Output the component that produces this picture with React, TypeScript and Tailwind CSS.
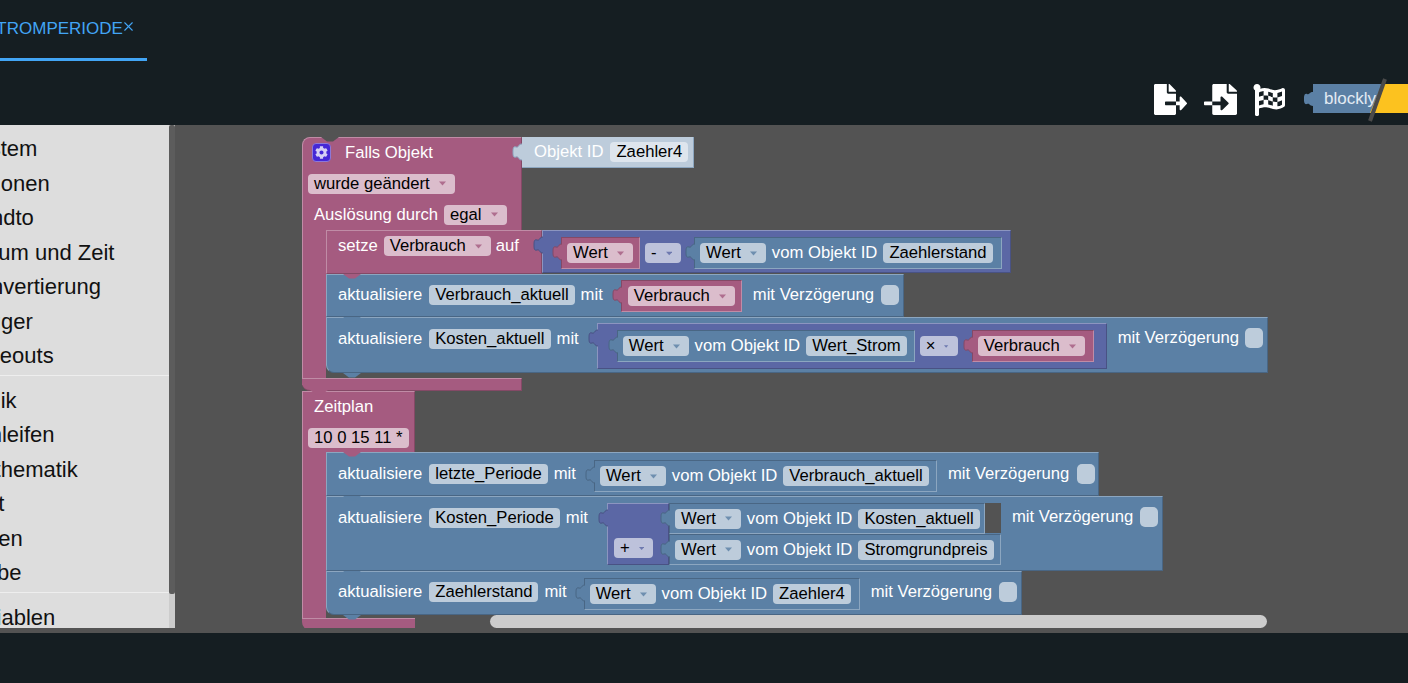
import { X } from "lucide-react";
import { FaCog, FaFileExport, FaFileImport, FaFlagCheckered } from "react-icons/fa";
import type { ReactNode } from "react";

type Tone = "pink" | "blue" | "purple";

const BLOCK: Record<Tone, string> = {
  pink: "bg-[#a55b80] border-t-[#c08ca6] border-l-[#c08ca6] border-b-[#844966] border-r-[#844966]",
  blue: "bg-[#5b80a5] border-t-[#8ca6c0] border-l-[#8ca6c0] border-b-[#496684] border-r-[#496684]",
  purple: "bg-[#5b67a5] border-t-[#8c95c0] border-l-[#8c95c0] border-b-[#495284] border-r-[#495284]",
};
const INNER: Record<Tone, string> = {
  pink: "bg-[#a55b80] border-t-[#844966] border-l-[#844966] border-b-[#c08ca6] border-r-[#c08ca6]",
  blue: "bg-[#5b80a5] border-t-[#496684] border-l-[#496684] border-b-[#8ca6c0] border-r-[#8ca6c0]",
  purple: "bg-[#5b67a5] border-t-[#495284] border-l-[#495284] border-b-[#8c95c0] border-r-[#8c95c0]",
};
const FIELD: Record<Tone, string> = {
  pink: "bg-[#dbbdcc]",
  blue: "bg-[#bdccdb]",
  purple: "bg-[#bdc2db]",
};
const FILL: Record<Tone, string> = {
  pink: "#a55b80",
  blue: "#5b80a5",
  purple: "#5b67a5",
};
const EDGE: Record<Tone, string> = {
  pink: "#844966",
  blue: "#496684",
  purple: "#495284",
};

// blockly's output connector, fill closes along the block edge, stroke only on the curve
function PuzzleTab({ color, edge, className = "top-[3px]" }: { color: string; edge: string; className?: string }) {
  const curve = "M10 3 C6 3 7 7 4 6 C1 5 1 8 1 11 C1 14 1 17 4 16 C7 15 6 19 10 19";
  return (
    <svg width="10" height="22" viewBox="0 0 10 22" className={`absolute -left-[10px] ${className}`}>
      <path d={`${curve} Z`} fill={color} />
      <path d={curve} fill="none" stroke={edge} strokeWidth="1" />
    </svg>
  );
}

function Notch({ color, className }: { color: string; className: string }) {
  return (
    <svg width="18" height="5" viewBox="0 0 18 5" className={`absolute z-10 ${className}`}>
      <path d="M0 0 L6 4.5 H12 L18 0 Z" fill={color} />
    </svg>
  );
}

function Text({ children, className = "" }: { children: ReactNode; className?: string }) {
  return (
    <span className={`h-[20px] shrink-0 whitespace-pre text-[16.67px] leading-[20px] text-white ${className}`}>
      {children}
    </span>
  );
}

function Field({
  tone,
  drop,
  children,
  className = "",
}: {
  tone: Tone;
  drop?: boolean;
  children: ReactNode;
  className?: string;
}) {
  return (
    <span
      className={`flex h-[20px] shrink-0 items-center whitespace-pre rounded-[4px] pl-[6px] text-[16.67px] leading-[20px] text-black ${
        drop ? "pr-[9px]" : "pr-[6px]"
      } ${FIELD[tone]} ${className}`}
    >
      {children}
      {drop && (
        <svg width="7" height="5" viewBox="0 0 7 5" className="ml-[9px] opacity-80">
          <path d="M0 0.5 H7 L3.5 4.5 Z" fill={FILL[tone]} />
        </svg>
      )}
    </span>
  );
}

function Check({ className = "" }: { className?: string }) {
  return <span className={`h-[20px] w-[18px] shrink-0 rounded-[5px] bg-[#bdccdb] ${className}`} />;
}

function Value({
  tone,
  className = "",
  children,
}: {
  tone: Tone;
  className?: string;
  children: ReactNode;
}) {
  return (
    <div className={`relative flex h-[32px] shrink-0 items-center border pl-[5px] ${INNER[tone]} ${className}`}>
      <PuzzleTab color={FILL[tone]} edge={EDGE[tone]} />
      {children}
    </div>
  );
}

function ObjectValue({ id, className = "" }: { id: string; className?: string }) {
  return (
    <Value tone="blue" className={className}>
      <Field tone="blue" drop>Wert</Field>
      <Text className="ml-[6px]">vom Objekt ID</Text>
      <Field tone="blue" className="ml-[6px]">{id}</Field>
    </Value>
  );
}

function Statement({
  className,
  pad = "pt-[10px]",
  children,
}: {
  className: string;
  pad?: string;
  children: ReactNode;
}) {
  return (
    <div className={`absolute flex items-start border pl-[11px] ${pad} ${BLOCK.blue} ${className}`}>
      {children}
    </div>
  );
}

const MENU = [
  ["System", "Aktionen", "Sendto", "Datum und Zeit", "Konvertierung", "Trigger", "Timeouts"],
  ["Logik", "Schleifen", "Mathematik", "Text", "Listen", "Farbe"],
  ["Variablen"],
];

function Sidebar() {
  return (
    <aside className="relative flex h-[503px] w-[175px] shrink-0 overflow-hidden">
      <div className="w-[169px] overflow-hidden bg-[#dddddd] pt-[7px]">
        {MENU.map((group, i) => (
          <div key={i} className={i < 2 ? "mb-[8px] border-b border-[#eeeeee] pb-[1px]" : ""}>
            {group.map((item) => (
              <div
                key={item}
                className="-ml-[36px] h-[34.5px] whitespace-nowrap text-[22px] leading-[34.5px] text-[#111111]"
              >
                {item}
              </div>
            ))}
          </div>
        ))}
      </div>
      <div className="w-[6px] bg-[#cccccc]">
        <div className="h-[469px] rounded-[2px] bg-[#5c5c5c]" />
      </div>
    </aside>
  );
}

function BlocklyLogo() {
  return (
    <svg width="106" height="46" viewBox="0 0 106 46" className="ml-[17px] shrink-0">
      <path d="M80 8 H106 V37 H66 Z" fill="#fcc21f" />
      <path
        d="M11 8 H80 L68 37 H11 V30 C7 30 8 27 5 28 C2 29 2 25 2 23 C2 21 2 17 5 18 C8 19 7 16 11 16 Z"
        fill="#5b80a5"
      />
      <text x="22" y="28" fontFamily="Liberation Sans, sans-serif" fontSize="17" fill="#e3ebf3">
        blockly
      </text>
      <path d="M83 3 L68 45" stroke="#4a4a4a" strokeWidth="4" />
    </svg>
  );
}

function Canvas() {
  return (
    <div className="relative h-[503px] flex-1 overflow-hidden bg-[#535353]">
      {/* Falls Objekt */}
      <div className={`absolute left-[127px] top-[12px] flex h-[94px] w-[220px] flex-col rounded-tl-[8px] border ${BLOCK.pink}`}>
        <div className="flex h-[29px] items-center pl-[9px]">
          <span className="flex h-[19px] w-[19px] items-center justify-center rounded-[4px] border border-[#8c78d8] bg-[#4527d6]">
            <FaCog size={13} className="text-[#d6cff5]" />
          </span>
          <Text className="ml-[14px]">Falls Objekt</Text>
        </div>
        <div className="flex h-[31px] items-center pl-[5px] pt-[2px]">
          <Field tone="pink" drop>wurde geändert</Field>
        </div>
        <div className="flex h-[31px] items-center pl-[11px] pt-[2px]">
          <Text>Auslösung durch</Text>
          <Field tone="pink" drop className="ml-[6px]">egal</Field>
        </div>
      </div>
      <Notch color="#535353" className="left-[146px] top-[12px]" />
      <div className="absolute left-[127px] top-[105px] h-[155px] w-[24px] border-l border-l-[#c08ca6] bg-[#a55b80]" />
      <div className="absolute left-[127px] top-[253px] h-[13px] w-[220px] rounded-bl-[8px] border-b border-r border-t border-b-[#844966] border-r-[#844966] border-t-[#c08ca6] bg-[#a55b80]" />

      {/* Objekt ID */}
      <div className="absolute left-[347px] top-[12px] flex h-[31px] w-[172px] items-center border-b border-r border-b-[#8ca6c0] border-r-[#8ca6c0] bg-[#bdccdb] pl-[12px]">
        <PuzzleTab color="#bdccdb" edge="#8ca6c0" className="top-[4px]" />
        <Text>Objekt ID</Text>
        <Field tone="blue" className="ml-[7px] bg-[#dee5ed]!">Zaehler4</Field>
      </div>

      {/* setze Verbrauch */}
      <div className={`absolute left-[151px] top-[105px] flex h-[44px] w-[216px] items-start border pl-[11px] pt-[5px] ${BLOCK.pink}`}>
        <Text>setze</Text>
        <Field tone="pink" drop className="ml-[6px]">Verbrauch</Field>
        <Text className="ml-[5px]">auf</Text>
      </div>
      <Notch color="#a55b80" className="left-[168px] top-[149px]" />
      <div className={`absolute left-[367px] top-[105px] flex h-[43px] w-[469px] items-start border pl-[18px] pt-[6px] ${BLOCK.purple}`}>
        <PuzzleTab color="#5b67a5" edge="#495284" />
        <Value tone="pink" className="w-[79px]">
          <Field tone="pink" drop>Wert</Field>
        </Value>
        <Field tone="purple" drop className="ml-[5px] mt-[6px] w-[36px]">-</Field>
        <Value tone="blue" className="ml-[13px] w-[308px]">
          <Field tone="blue" drop>Wert</Field>
          <Text className="ml-[6px]">vom Objekt ID</Text>
          <Field tone="blue" className="ml-[6px]">Zaehlerstand</Field>
        </Value>
      </div>

      {/* aktualisiere Verbrauch_aktuell */}
      <Statement className="left-[151px] top-[149px] h-[43px] w-[578px]">
        <Text>aktualisiere</Text>
        <Field tone="blue" className="ml-[7px]">Verbrauch_aktuell</Field>
        <Text className="ml-[6px]">mit</Text>
        <Value tone="pink" className="-mt-[5px] ml-[18px] w-[121px]">
          <Field tone="pink" drop className="ml-[1px]">Verbrauch</Field>
        </Value>
        <Text className="ml-[11px]">mit Verzögerung</Text>
        <Check className="ml-[7px]" />
      </Statement>
      <Notch color="#5b80a5" className="left-[168px] top-[192px]" />

      {/* aktualisiere Kosten_aktuell */}
      <Statement pad="pt-[11px]" className="left-[151px] top-[192px] h-[56px] w-[942px] rounded-bl-[8px]">
        <Text>aktualisiere</Text>
        <Field tone="blue" className="ml-[7px]">Kosten_aktuell</Field>
        <Text className="ml-[6px]">mit</Text>
        <div className={`relative -mt-[6px] ml-[18px] flex h-[46px] w-[510px] shrink-0 items-start border pl-[19px] pt-[6px] ${BLOCK.purple}`}>
          <PuzzleTab color="#5b67a5" edge="#495284" />
          <ObjectValue id="Wert_Strom" className="w-[298px]" />
          <Field tone="purple" drop className="ml-[5px] mt-[6px] w-[38px]">×</Field>
          <Value tone="pink" className="ml-[14px] w-[122px]">
            <Field tone="pink" drop>Verbrauch</Field>
          </Value>
        </div>
        <Text className="-mt-[1px] ml-[11px]">mit Verzögerung</Text>
        <Check className="-mt-[1px] ml-[6px]" />
      </Statement>
      <Notch color="#5b80a5" className="left-[168px] top-[248px]" />

      {/* Zeitplan */}
      <div className={`absolute left-[127px] top-[266px] flex h-[62px] w-[113px] flex-col border ${BLOCK.pink}`}>
        <div className="flex h-[30px] items-center pl-[11px]">
          <Text>Zeitplan</Text>
        </div>
        <div className="flex h-[31px] items-center pl-[5px] pt-[2px]">
          <Field tone="pink">10 0 15 11 *</Field>
        </div>
      </div>
      <Notch color="#a55b80" className="left-[135px] top-[265px]" />
      <div className="absolute left-[127px] top-[327px] h-[170px] w-[24px] border-l border-l-[#c08ca6] bg-[#a55b80]" />
      <div className="absolute left-[127px] top-[493px] h-[12px] w-[113px] rounded-bl-[8px] border-t border-t-[#c08ca6] bg-[#a55b80]" />

      {/* aktualisiere letzte_Periode */}
      <Statement pad="pt-[11px]" className="left-[151px] top-[327px] h-[44px] w-[773px]">
        <Text>aktualisiere</Text>
        <Field tone="blue" className="ml-[7px]">letzte_Periode</Field>
        <Text className="ml-[6px]">mit</Text>
        <ObjectValue id="Verbrauch_aktuell" className="-mt-[4px] ml-[18px] w-[343px]" />
        <Text className="ml-[11px]">mit Verzögerung</Text>
        <Check className="ml-[8px]" />
      </Statement>
      <Notch color="#a55b80" className="left-[168px] top-[327px]" />
      <Notch color="#5b80a5" className="left-[168px] top-[371px]" />

      {/* aktualisiere Kosten_Periode */}
      <Statement pad="pt-[11px]" className="left-[151px] top-[371px] h-[75px] w-[837px]">
        <Text>aktualisiere</Text>
        <Field tone="blue" className="ml-[7px]">Kosten_Periode</Field>
        <Text className="ml-[6px]">mit</Text>
        <div className={`relative -mt-[5px] ml-[19px] flex h-[62px] w-[62px] shrink-0 items-end border pb-[6px] pl-[6px] ${BLOCK.purple}`}>
          <PuzzleTab color="#5b67a5" edge="#495284" />
          <Field tone="purple" drop className="w-[39px]">+</Field>
        </div>
        <div className="-mt-[5px] flex h-[62px] w-[333px] shrink-0 flex-col">
          <ObjectValue id="Kosten_aktuell" className="h-[31px]! w-[316px]" />
          <ObjectValue id="Stromgrundpreis" className="h-[31px]! w-[332px]" />
        </div>
        <Text className="-mt-[1px] ml-[10px]">mit Verzögerung</Text>
        <Check className="-mt-[1px] ml-[7px]" />
      </Statement>
      <div className="absolute left-[810px] top-[378px] h-[30px] w-[16px] bg-[#535353]" />
      <Notch color="#5b80a5" className="left-[168px] top-[446px]" />

      {/* aktualisiere Zaehlerstand */}
      <Statement className="left-[151px] top-[446px] h-[44px] w-[696px] rounded-bl-[8px]">
        <Text>aktualisiere</Text>
        <Field tone="blue" className="ml-[7px]">Zaehlerstand</Field>
        <Text className="ml-[6px]">mit</Text>
        <ObjectValue id="Zaehler4" className="-mt-[4px] ml-[17px] w-[276px]" />
        <Text className="ml-[11px]">mit Verzögerung</Text>
        <Check className="ml-[7px]" />
      </Statement>
      <Notch color="#5b80a5" className="left-[168px] top-[490px]" />

      {/* horizontal scrollbar */}
      <div className="absolute left-[315px] top-[490px] z-20 h-[13px] w-[777px] rounded-full bg-[#cccccc]" />
    </div>
  );
}

export default function App() {
  return (
    <div className="flex h-[683px] w-[1408px] flex-col overflow-hidden bg-[#151e22] font-['Liberation_Sans',Arial,sans-serif]">
      <header className="h-[125px] shrink-0">
        <div className="h-[70px]">
          <div className="flex h-[61px] w-[147px] items-start overflow-hidden border-b-[3px] border-[#42a5f5] pt-[19px]">
            <span className="-ml-[15px] whitespace-nowrap text-[17px] leading-[20px] text-[#42a5f5]">STROMPERIODE</span>
            <X size={15} strokeWidth={1.75} className="-ml-[2px] shrink-0 text-[#42a5f5]" />
          </div>
        </div>
        <div className="flex h-[55px] items-start justify-end pt-[6px]">
          <FaFileExport preserveAspectRatio="none" className="mt-[8px] h-[31px] w-[33px] text-white" />
          <FaFileImport preserveAspectRatio="none" className="ml-[17px] mt-[8px] h-[31px] w-[33px] text-white" />
          <FaFlagCheckered size={32} className="ml-[16px] mt-[8px] text-white" />
          <BlocklyLogo />
        </div>
      </header>
      <div className="flex h-[508px] shrink-0 items-start bg-[#535353]">
        <Sidebar />
        <Canvas />
      </div>
      <div className="flex-1 bg-[#151e22]" />
    </div>
  );
}
